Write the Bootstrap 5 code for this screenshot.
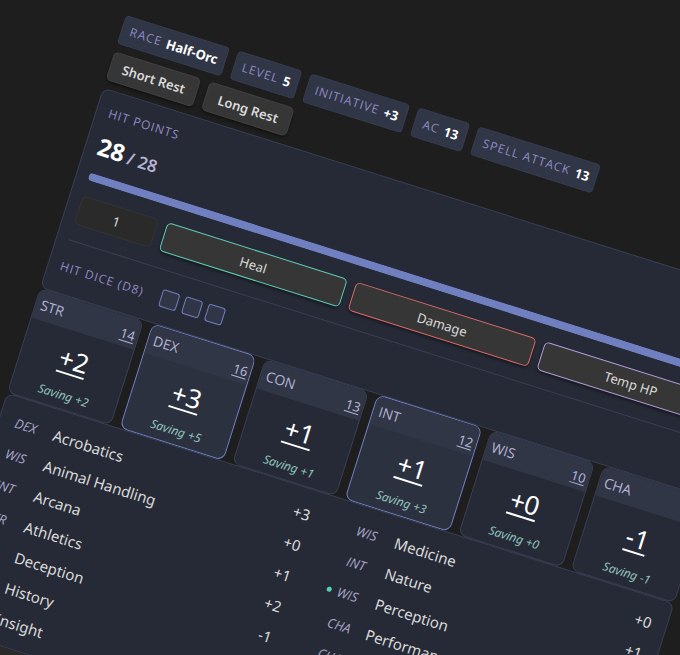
<!DOCTYPE html>
<html lang="en">
<head>
<meta charset="utf-8">
<meta name="viewport" content="width=device-width, initial-scale=1">
<title>Character sheet</title>
<link href="https://cdn.jsdelivr.net/npm/bootstrap@5.3.0/dist/css/bootstrap.min.css" rel="stylesheet">
<style>
:root { --line:#393e54; --panel:#262a36; --raised:#303646; --accent:#6f7fbf; --label:#9189c4; }
body { background:#1e1e1e; color:#dadada; font-family:"Segoe UI","Noto Sans",sans-serif; font-size:13px; line-height:20px; }
.viewport { padding:15px 0 0 126px; }
.sheet { width:calc(100vw + 20px); transform:rotate(17.5deg); transform-origin:0 0; }
.row-gap { gap:9px; }
.stat-chip { background:var(--raised); border:1px solid #363c50; border-radius:4px; padding:4px 7px 4px 8px; height:30px; white-space:nowrap; gap:5px; }
.caps { color:var(--label); font-family:"Open Sans","Noto Sans",sans-serif; font-size:12px; letter-spacing:1px; text-transform:uppercase; }
.stat-chip strong { color:#fff; font-size:13px; }
.tool { background:#363636; color:#dadada; border:1px solid #404040; border-radius:5px; height:30px; padding:0 12px; font-size:13px; box-shadow:0 2px 3px #0006; }
.tool.rest { font-weight:600; }
.tool.heal { border-color:#5fcdb7; }
.tool.damage { border-color:#dd6b6b; }
.tool.temp { border-color:#b39ddb; }
.panel { background:var(--panel); border:1px solid var(--line); border-radius:8px; }
.hp { padding:12px; height:210px; }
.hp-now { color:#fff; font-size:24px; line-height:32px; font-weight:700; }
.hp-max { color:#b5b3d3; font-size:17px; font-weight:600; }
.hp-bar { height:8px; border-radius:4px; background:var(--raised); --bs-progress-bar-bg:#6f7fbf; }
.amount { width:80px; height:30px; flex:none; background:#2a2a2a; border:1px solid #343434; border-radius:5px; color:#dadada; text-align:center; font-size:13px; }
.dice-row { border-top:1px solid var(--line); padding-top:17px; gap:18px; }
.dice { gap:6px; }
.die { appearance:none; width:18px; height:18px; margin:0; background:var(--raised); border:1px solid var(--accent); border-radius:3px; }
.abilities { display:grid; grid-template-columns:repeat(6,1fr); gap:9px; }
.ability { height:110px; overflow:hidden; text-align:center; }
.ability.proficient { background:#2c3140; border-color:var(--accent); }
.ability header { background:var(--raised); height:30px; padding:0 3px 0 5px; color:#b5b3d3; }
.ability h2 { font-family:"Open Sans","Noto Sans",sans-serif; font-size:14px; line-height:30px; font-weight:400; margin:0; }
.score { font-size:13px; line-height:34px; text-decoration:underline; text-underline-offset:2px; }
.modifier { color:#fff; font-size:26px; line-height:32px; border-bottom:2px solid #fff; margin-top:12px; height:32px; }
.saving { color:#8fc3bd; font-size:12px; line-height:16px; font-style:italic; margin-top:13px; }
.skills { display:grid; grid-template-columns:1fr 1fr; column-gap:28px; padding:9px 5px; }
.skill { height:32px; padding-right:10px; font-size:15px; gap:6px; }
.dot { width:5px; height:5px; border-radius:50%; flex:none; }
.dot.on { background:#56cfb2; }
.attr { width:34px; font-family:"Open Sans","Noto Sans",sans-serif; font-size:13px; font-style:italic; color:#a9a6c9; flex:none; }
.notes { background:#2a2a2a; height:120px; }
</style>
<script src="https://cdn.jsdelivr.net/npm/bootstrap@5.3.0/dist/js/bootstrap.bundle.min.js"></script>
</head>
<body>
<div class="viewport vh-100 overflow-hidden">
<main class="sheet d-flex flex-column">
  <div class="d-flex row-gap mb-2">
    <div class="stat-chip d-flex align-items-center"><span class="caps">Race</span><strong>Half-Orc</strong></div>
    <div class="stat-chip d-flex align-items-center"><span class="caps">Level</span><strong>5</strong></div>
    <div class="stat-chip d-flex align-items-center"><span class="caps">Initiative</span><strong>+3</strong></div>
    <div class="stat-chip d-flex align-items-center"><span class="caps">AC</span><strong>13</strong></div>
    <div class="stat-chip d-flex align-items-center"><span class="caps">Spell Attack</span><strong>13</strong></div>
  </div>
  <div class="d-flex row-gap mb-2">
    <button class="tool rest" type="button">Short Rest</button>
    <button class="tool rest" type="button">Long Rest</button>
  </div>
  <section class="panel hp d-flex flex-column">
    <div class="caps">Hit Points</div>
    <div class="d-flex align-items-baseline gap-1 mt-2 mb-2"><span class="hp-now">28</span><span class="hp-max">/ 28</span></div>
    <div class="progress hp-bar mt-1" role="progressbar" aria-label="Hit points" aria-valuenow="28" aria-valuemin="0" aria-valuemax="28"><div class="progress-bar w-100"></div></div>
    <div class="d-flex row-gap mt-3">
      <input class="amount" type="text" inputmode="numeric" value="1" aria-label="Amount">
      <button class="tool heal flex-fill w-100" type="button">Heal</button>
      <button class="tool damage flex-fill w-100" type="button">Damage</button>
      <button class="tool temp flex-fill w-100" type="button">Temp HP</button>
    </div>
    <div class="dice-row d-flex align-items-center mt-3">
      <span class="caps">Hit Dice (d8)</span>
      <div class="dice d-flex">
        <input class="die" type="checkbox" aria-label="Hit die 1"><input class="die" type="checkbox" aria-label="Hit die 2"><input class="die" type="checkbox" aria-label="Hit die 3">
      </div>
    </div>
  </section>
  <section class="abilities">
    <article class="panel ability"><header class="d-flex justify-content-between"><h2>STR</h2><span class="score">14</span></header><div class="modifier d-inline-block">+2</div><div class="saving">Saving +2</div></article>
    <article class="panel ability proficient"><header class="d-flex justify-content-between"><h2>DEX</h2><span class="score">16</span></header><div class="modifier d-inline-block">+3</div><div class="saving">Saving +5</div></article>
    <article class="panel ability"><header class="d-flex justify-content-between"><h2>CON</h2><span class="score">13</span></header><div class="modifier d-inline-block">+1</div><div class="saving">Saving +1</div></article>
    <article class="panel ability proficient"><header class="d-flex justify-content-between"><h2>INT</h2><span class="score">12</span></header><div class="modifier d-inline-block">+1</div><div class="saving">Saving +3</div></article>
    <article class="panel ability"><header class="d-flex justify-content-between"><h2>WIS</h2><span class="score">10</span></header><div class="modifier d-inline-block">+0</div><div class="saving">Saving +0</div></article>
    <article class="panel ability"><header class="d-flex justify-content-between"><h2>CHA</h2></header><div class="modifier d-inline-block">-1</div><div class="saving">Saving -1</div></article>
  </section>
  <section class="panel skills">
    <div>
      <div class="skill d-flex align-items-center"><span class="dot"></span><span class="attr">DEX</span><span class="me-auto">Acrobatics</span><span>+3</span></div>
      <div class="skill d-flex align-items-center"><span class="dot"></span><span class="attr">WIS</span><span class="me-auto">Animal Handling</span><span>+0</span></div>
      <div class="skill d-flex align-items-center"><span class="dot"></span><span class="attr">INT</span><span class="me-auto">Arcana</span><span>+1</span></div>
      <div class="skill d-flex align-items-center"><span class="dot"></span><span class="attr">STR</span><span class="me-auto">Athletics</span><span>+2</span></div>
      <div class="skill d-flex align-items-center"><span class="dot"></span><span class="attr"></span><span class="me-auto">Deception</span><span>-1</span></div>
      <div class="skill d-flex align-items-center"><span class="dot"></span><span class="attr"></span><span class="me-auto">History</span></div>
      <div class="skill d-flex align-items-center"><span class="dot"></span><span class="attr"></span><span class="me-auto">Insight</span></div>
    </div>
    <div>
      <div class="skill d-flex align-items-center"><span class="dot"></span><span class="attr">WIS</span><span class="me-auto">Medicine</span><span>+0</span></div>
      <div class="skill d-flex align-items-center"><span class="dot"></span><span class="attr">INT</span><span class="me-auto">Nature</span><span>+1</span></div>
      <div class="skill d-flex align-items-center"><span class="dot on"></span><span class="attr">WIS</span><span class="me-auto">Perception</span></div>
      <div class="skill d-flex align-items-center"><span class="dot"></span><span class="attr">CHA</span><span class="me-auto">Performance</span></div>
      <div class="skill d-flex align-items-center"><span class="dot"></span><span class="attr">CHA</span></div>
    </div>
  </section>
  <div class="notes"></div>
</main>
</div>
</body>
</html>
